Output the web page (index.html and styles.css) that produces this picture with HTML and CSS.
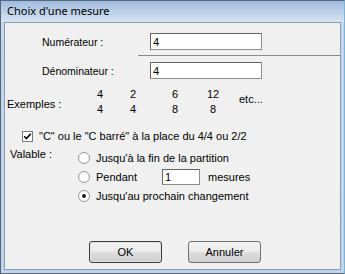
FILE: index.html
```html
<!DOCTYPE html>
<html>
<head>
    <title>Choix d'une mesure</title>
    <meta name="viewport" content="width=device-width, initial-scale=1">
    <link rel="stylesheet" href="styles.css">
</head>
<body>
    <div class="window">
        <div class="titlebar">Choix d'une mesure</div>
        <div class="client">
            <div class="field field-first">
                <label class="field-label" for="num">Numérateur :</label>
                <input class="text-input" id="num" type="text" value="4">
            </div>
            <div class="sep"></div>
            <div class="field">
                <label class="field-label" for="den">Dénominateur :</label>
                <input class="text-input" id="den" type="text" value="4">
            </div>

            <div class="examples">
                <span class="ex-label">Exemples :</span>
                <div class="fracs">
                    <div class="frac"><span>4</span><span>4</span></div>
                    <div class="frac"><span>2</span><span>4</span></div>
                    <div class="frac"><span>6</span><span>8</span></div>
                    <div class="frac"><span>12</span><span>8</span></div>
                </div>
                <span class="etc">etc...</span>
            </div>

            <div class="check">
                <span class="box">
                    <svg width="9" height="9" viewBox="0 0 9 9"><path d="M1.2 4.3 L3.4 6.6 L7.8 1.8" fill="none" stroke="#000" stroke-width="1.6"/></svg>
                </span>
                <span>"C" ou le "C barré" à la place du 4/4 ou 2/2</span>
            </div>

            <div class="valable">
                <span class="val-label">Valable :</span>
                <div class="options">
                    <div class="opt"><span class="radio"></span><span>Jusqu'à la fin de la partition</span></div>
                    <div class="opt">
                        <span class="radio"></span>
                        <span class="pend">Pendant</span>
                        <input class="text-input small" type="text" value="1">
                        <span>mesures</span>
                    </div>
                    <div class="opt"><span class="radio on"></span><span>Jusqu'au prochain changement</span></div>
                </div>
            </div>

            <div class="buttons">
                <button class="btn btn-default">OK</button>
                <button class="btn">Annuler</button>
            </div>
        </div>
    </div>
</body>
</html>
```

FILE: styles.css
```css
body {
    margin: 0;
    background-color: #f0f0f0;
    font-family: "Liberation Sans", Arial, sans-serif;
    font-size: 10.5px;
    color: #000;
}

.window {
    width: 345px;
    height: 274px;
    box-sizing: border-box;
    border: 1px solid #55657a;
    border-right-color: #7fb3d3;
    background: linear-gradient(#a0bbdf, #d6e3f1 21px, #c3d6ec 22px, #bfd3ea);
    display: flex;
    flex-direction: column;
}

.titlebar {
    height: 21px;
    flex: none;
    padding-left: 6px;
    line-height: 20px;
    font-family: "Noto Sans", sans-serif;
    font-size: 11px;
    color: #000;
}

.client {
    flex: 1;
    margin: 0 3px 3px 3px;
    border: 1px solid #8a9cb3;
    background-color: #f0f0f0;
}

.field {
    display: flex;
    align-items: center;
    height: 17px;
}

.field-first {
    margin-top: 10px;
}

.field-label {
    width: 108px;
    padding-left: 37px;
}

.text-input {
    width: 112px;
    height: 17px;
    box-sizing: border-box;
    border: 1px solid #646464;
    border-right-color: #8c8c8c;
    border-bottom-color: #8c8c8c;
    background: #fff;
    padding: 0 2px;
    font-family: inherit;
    font-size: 11px;
    margin: 0;
    outline: none;
}

.sep {
    margin: 5px 0 6px 133px;
    border-top: 1px solid #8a8a8a;
    height: 0;
}

.examples {
    display: flex;
    align-items: center;
    margin-top: 8px;
    height: 30px;
    font-size: 11px;
}

.ex-label {
    width: 74px;
    padding-left: 2px;
    padding-top: 4px;
}

.fracs {
    display: flex;
}

.frac {
    display: flex;
    flex-direction: column;
    align-items: center;
    width: 38px;
    line-height: 15px;
}

.frac:nth-child(2) { width: 28px; }
.frac:nth-child(3) { width: 56px; }
.frac:nth-child(4) { width: 20px; }

.etc {
    margin-left: 16px;
    padding-bottom: 6px;
}

.check {
    display: flex;
    align-items: center;
    margin-top: 12px;
    margin-left: 17px;
    height: 14px;
    font-size: 11px;
}

.box {
    width: 9px;
    height: 9px;
    border: 1px solid #7a7a7a;
    background: #fff;
    display: flex;
    align-items: center;
    justify-content: center;
    margin-right: 6px;
}

.valable {
    display: flex;
    margin-top: 3px;
    font-size: 11px;
}

.val-label {
    width: 68px;
    padding-left: 5px;
    padding-top: 2px;
}

.options {
    display: flex;
    flex-direction: column;
    gap: 3px;
    padding-top: 4px;
}

.opt {
    display: flex;
    align-items: center;
    height: 16px;
}

.radio {
    width: 10px;
    height: 10px;
    border-radius: 50%;
    border: 1px solid #9a9a9a;
    background: radial-gradient(circle, #fff 55%, #e4e4e4);
    margin-right: 6px;
    flex: none;
    position: relative;
}

.radio.on::after {
    content: "";
    position: absolute;
    left: 3px;
    top: 3px;
    width: 4px;
    height: 4px;
    border-radius: 50%;
    background: #1a1a1a;
}

.pend {
    width: 66px;
}

.text-input.small {
    width: 38px;
    height: 16px;
    margin-right: 8px;
}

.buttons {
    display: flex;
    margin-top: 37px;
    padding-left: 84px;
    gap: 26px;
}

.btn {
    width: 73px;
    height: 22px;
    border: 1px solid #707070;
    border-radius: 3px;
    background: linear-gradient(#f2f2f2, #ebebeb 50%, #dddddd 51%, #cfcfcf);
    font-family: inherit;
    font-size: 11px;
    color: #000;
    padding: 0;
}

.btn-default {
    border-color: #3c3c3c;
    box-shadow: inset 0 0 0 1px #e0e0e0;
}
```
